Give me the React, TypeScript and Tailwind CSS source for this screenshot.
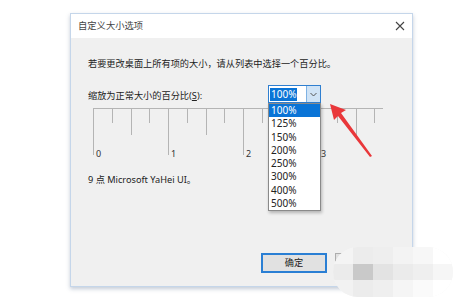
import React from "react";

const options = ["100%", "125%", "150%", "200%", "250%", "300%", "400%", "500%"];

function Ruler() {
  const ticks = Array.from({ length: 16 }, (_, i) => i);
  return (
    <svg width="292" height="54" className="block">
      <line x1="0" y1="0.5" x2="290" y2="0.5" stroke="#b4b4b4" strokeWidth="1" />
      {ticks.map((i) => {
        const x = Math.round(i * 18.75) + 0.5;
        const len = i % 4 === 0 ? 47 : i % 2 === 0 ? 27 : 15;
        return <line key={i} x1={x} y1="0" x2={x} y2={len} stroke="#b4b4b4" strokeWidth="1" />;
      })}
      {[0, 1, 2, 3].map((n) => (
        <text key={n} x={n * 75 + 3} y="49" fontSize="9" fill="#333" fontFamily="'Noto Sans', sans-serif">
          {n}
        </text>
      ))}
    </svg>
  );
}

export default function App() {
  return (
    <div className="w-[468px] h-[308px] bg-white relative overflow-hidden pt-[13px] font-['Noto_Sans','Noto_Sans_CJK_SC',sans-serif] text-[#222]">
      <div className="ml-[70px] w-[343px] h-[274px] border border-[#c5d6ea] shadow-[0_2px_4px_rgba(90,110,140,0.35)] flex flex-col">
        <div className="h-[24px] bg-white flex items-center justify-between pl-[7px] pr-[7px]">
          <span className="text-[9.3px] leading-[12px] text-[#444]">自定义大小选项</span>
          <svg width="10" height="10" viewBox="0 0 10 10">
            <path d="M1 1 L9 9 M9 1 L1 9" stroke="#444" strokeWidth="1.1" />
          </svg>
        </div>
        <div className="flex-1 bg-[#f0f0f0] pl-[17px] pr-[11px] pt-[20px] flex flex-col">
          <p className="text-[9.2px] leading-[12px]">若要更改桌面上所有项的大小，请从列表中选择一个百分比。</p>
          <div className="mt-[15px] flex items-center">
            <span className="w-[180px] text-[9.2px] leading-[12px] mt-[3px]">缩放为正常大小的百分比(<span className="underline">S</span>):</span>
            <div className="relative">
              <div className="w-[53px] h-[18px] border border-[#2f7fd0] bg-white flex">
                <div className="flex-1 flex items-center pl-[1px]">
                  <span className="bg-[#0a74d6] text-white text-[10px] leading-[13px] px-[1px]">100%</span>
                </div>
                <div className="w-[14px] bg-[#cfe3f6] border-l border-[#7fb2e3] flex items-center justify-center">
                  <svg width="7" height="5" viewBox="0 0 7 5">
                    <path d="M0.5 1 L3.5 4 L6.5 1" stroke="#555" fill="none" strokeWidth="1" />
                  </svg>
                </div>
              </div>
              <div className="absolute left-0 top-[18px] w-[53px] bg-white border border-[#8a8a8a] shadow-[1px_2px_3px_rgba(0,0,0,0.25)] z-10 py-0">
                {options.map((o, i) => (
                  <div
                    key={o}
                    className={
                      i === 0
                        ? "h-[13.3px] bg-[#0a74d6] text-white text-[10px] leading-[13.3px] pl-[2px]"
                        : "h-[13.3px] text-[#222] text-[10px] leading-[13.3px] pl-[2px]"
                    }
                  >
                    {o}
                  </div>
                ))}
              </div>
            </div>
          </div>
          <div className="mt-[5px] ml-[5px]">
            <Ruler />
          </div>
          <p className="mt-[12px] text-[9.2px] leading-[12px]">9 点 Microsoft YaHei UI。</p>
          <div className="mt-auto mb-[13px] flex justify-end gap-[8px]">
            <button className="w-[66px] h-[20px] border-2 border-[#2a7fd4] bg-[#e1e1e1] text-[9.2px] leading-[12px]">确定</button>
            <button className="w-[66px] h-[20px] border border-[#adadad] bg-[#e1e1e1] text-[9.2px] leading-[12px]">取消</button>
          </div>
        </div>
      </div>

      <svg className="absolute left-[325px] top-[98px]" width="55" height="65" viewBox="0 0 55 65">
        <polygon points="5,6 21,12 16,15 47,58 45,59 13,18 9,22" fill="#e9373a" />
      </svg>

      <div className="absolute left-[333px] top-[247px] w-[120px] h-[50px] rounded-[25px] bg-[#f6f6f6] overflow-hidden grid grid-cols-6 grid-rows-3">
        <div className="bg-[#f4f4f4]" />
        <div className="bg-[#ececec]" />
        <div className="bg-[#eeeeee]" />
        <div className="bg-[#f3f3f3]" />
        <div className="bg-[#f7f7f7]" />
        <div className="bg-white" />
        <div className="bg-[#ebebeb]" />
        <div className="bg-[#c9c9c9]" />
        <div className="bg-[#e3e3e3]" />
        <div className="bg-[#ebebeb]" />
        <div className="bg-[#efefef]" />
        <div className="bg-[#f6f6f6]" />
        <div className="bg-[#f2f2f2]" />
        <div className="bg-[#ececec]" />
        <div className="bg-[#efefef]" />
        <div className="bg-[#f5f5f5]" />
        <div className="bg-[#fafafa]" />
        <div className="bg-white" />
      </div>
    </div>
  );
}
